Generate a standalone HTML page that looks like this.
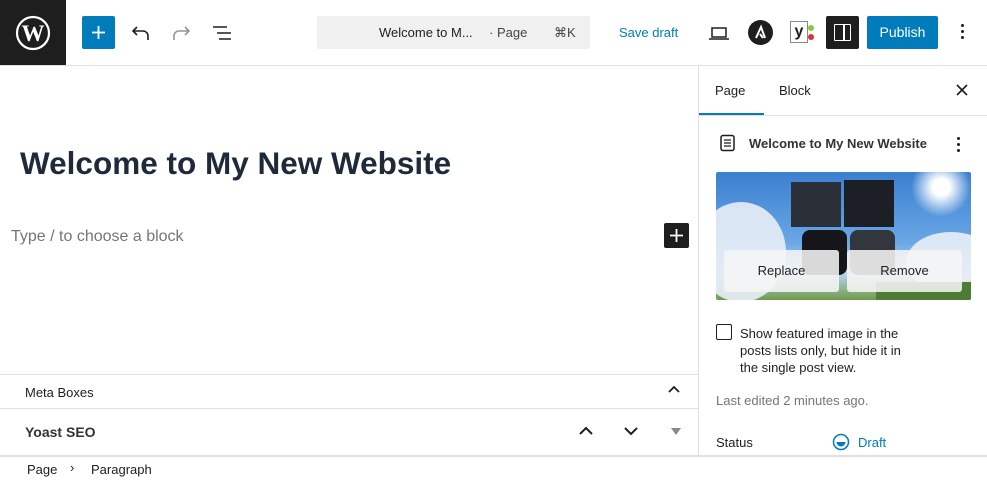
<!DOCTYPE html>
<html><head><style>
*{box-sizing:border-box;margin:0;padding:0}
body{width:987px;height:481px;overflow:hidden;font-family:"Liberation Sans",sans-serif;background:#fff;color:#1e1e1e;position:relative;font-size:13px}
.a{position:absolute}
</style></head><body>
<div class="a" style="left:0;top:0;width:66px;height:65px;background:#1e1e1e"></div>
<svg class="a" style="left:15px;top:15px" width="36" height="36" viewBox="0 0 36 36"><circle cx="18" cy="18" r="16" fill="none" stroke="#fff" stroke-width="2.2"/><text x="18" y="26" text-anchor="middle" font-family="Liberation Serif" font-weight="bold" font-size="23" fill="#fff">W</text></svg>
<div class="a" style="left:0;top:65px;width:987px;height:1px;background:#e0e0e0"></div>
<div class="a" style="left:82px;top:16px;width:33px;height:33px;background:#007cba;border-radius:2px"></div>
<svg class="a" style="left:82px;top:16px" width="33" height="33"><path d="M16.5 10v13M10 16.5h13" stroke="#fff" stroke-width="1.8"/></svg>
<svg class="a" style="left:128px;top:22px" width="24" height="22" viewBox="0 0 24 22"><path d="M20 18v-4a5 5 0 0 0-5-5H5M9 5L5 9l4 4" fill="none" stroke="#1e1e1e" stroke-width="1.6"/></svg>
<svg class="a" style="left:170px;top:22px" width="24" height="22" viewBox="0 0 24 22"><path d="M4 18v-4a5 5 0 0 1 5-5h10M15 5l4 4-4 4" fill="none" stroke="#949494" stroke-width="1.6"/></svg>
<svg class="a" style="left:210px;top:22px" width="24" height="22" viewBox="0 0 24 22"><path d="M3 5h14M7 11h14M9 17h12" stroke="#1e1e1e" stroke-width="1.6"/></svg>
<div class="a" style="left:317px;top:16px;width:273px;height:33px;background:#f0f0f0;border-radius:2px"></div>
<div class="a" style="left:379px;top:25px;font-size:13px">Welcome to M...</div>
<div class="a" style="left:489px;top:25px;font-size:13px;color:#444">· Page</div>
<div class="a" style="left:554px;top:25px;font-size:13px;color:#444">⌘K</div>
<div class="a" style="left:619px;top:25px;font-size:13px;color:#007cba">Save draft</div>
<svg class="a" style="left:707px;top:22px" width="24" height="22" viewBox="0 0 24 22"><path d="M5 6h14v9H5zM2 17h20" fill="none" stroke="#1e1e1e" stroke-width="1.5"/></svg>
<div class="a" style="left:748px;top:20px;width:25px;height:25px;border-radius:50%;background:#1e1e1e"></div>
<svg class="a" style="left:748px;top:20px" width="25" height="25" viewBox="0 0 25 25"><path d="M8 18l5-11 4 11M12 14l3 4" fill="none" stroke="#fff" stroke-width="2"/></svg>
<div class="a" style="left:790px;top:21px;width:18px;height:22px;border:1px solid #888;font-weight:bold;font-size:16px;text-align:center;line-height:20px">y</div>
<div class="a" style="left:808px;top:25px;width:6px;height:6px;border-radius:50%;background:#7ad03a"></div>
<div class="a" style="left:808px;top:34px;width:6px;height:6px;border-radius:50%;background:#dc3232"></div>
<div class="a" style="left:826px;top:16px;width:33px;height:33px;background:#1e1e1e;border-radius:2px"></div>
<div class="a" style="left:834px;top:24px;width:17px;height:17px;border:1.5px solid #fff;border-radius:1px"></div>
<div class="a" style="left:843px;top:24px;width:1.5px;height:17px;background:#fff"></div>
<div class="a" style="left:867px;top:16px;width:71px;height:33px;background:#007cba;border-radius:2px;color:#fff;font-size:14px;line-height:33px;text-align:center">Publish</div>
<div class="a" style="left:961px;top:24px;width:3px;height:3px;border-radius:50%;background:#1e1e1e;box-shadow:0 6px 0 #1e1e1e,0 12px 0 #1e1e1e"></div>
<div class="a" style="left:698px;top:66px;width:1px;height:390px;background:#e0e0e0"></div>
<div class="a" style="left:20px;top:145px;font-size:31.5px;font-weight:bold;color:#1e2a3a">Welcome to My New Website</div>
<div class="a" style="left:11px;top:228px;font-size:16px;color:#757575">Type / to choose a block</div>
<div class="a" style="left:664px;top:223px;width:25px;height:25px;background:#1e1e1e;border-radius:2px"></div>
<svg class="a" style="left:664px;top:223px" width="25" height="25"><path d="M12.5 6v13M6 12.5h13" stroke="#fff" stroke-width="1.8"/></svg>
<div class="a" style="left:0;top:374px;width:698px;height:1px;background:#e0e0e0"></div>
<div class="a" style="left:25px;top:385px;font-size:13px">Meta Boxes</div>
<svg class="a" style="left:667px;top:384px" width="14" height="12"><path d="M2 8l5-5 5 5" fill="none" stroke="#1e1e1e" stroke-width="1.8"/></svg>
<div class="a" style="left:0;top:408px;width:698px;height:1px;background:#e0e0e0"></div>
<div class="a" style="left:25px;top:424px;font-size:14px;font-weight:bold;color:#333">Yoast SEO</div>
<svg class="a" style="left:578px;top:425px" width="16" height="12"><path d="M2 9l6-6 6 6" fill="none" stroke="#1e1e1e" stroke-width="2"/></svg>
<svg class="a" style="left:623px;top:425px" width="16" height="12"><path d="M2 3l6 6 6-6" fill="none" stroke="#1e1e1e" stroke-width="2"/></svg>
<svg class="a" style="left:671px;top:428px" width="10" height="8"><path d="M0 0h10L5 7z" fill="#888"/></svg>
<div class="a" style="left:0;top:455px;width:987px;height:2px;background:#e0e0e0"></div>
<div class="a" style="left:27px;top:462px;font-size:13px">Page</div>
<div class="a" style="left:70px;top:460px;font-size:13px">›</div>
<div class="a" style="left:91px;top:462px;font-size:13px">Paragraph</div>
<div class="a" style="left:715px;top:83px;font-size:13px">Page</div>
<div class="a" style="left:779px;top:83px;font-size:13px">Block</div>
<div class="a" style="left:699px;top:113px;width:65px;height:2px;background:#007cba"></div>
<div class="a" style="left:699px;top:115px;width:288px;height:1px;background:#e0e0e0"></div>
<svg class="a" style="left:955px;top:83px" width="14" height="14"><path d="M2 2l10 10M12 2L2 12" stroke="#1e1e1e" stroke-width="1.6"/></svg>
<svg class="a" style="left:719px;top:134px" width="18" height="18"><rect x="2" y="1.5" width="13" height="15" rx="2" fill="none" stroke="#1e1e1e" stroke-width="1.5"/><path d="M5 6h7M5 9h7M5 12h7" stroke="#1e1e1e" stroke-width="1.3"/></svg>
<div class="a" style="left:749px;top:136px;font-size:13px;font-weight:bold;color:#333">Welcome to My New Website</div>
<div class="a" style="left:957px;top:137px;width:3px;height:3px;border-radius:50%;background:#1e1e1e;box-shadow:0 6px 0 #1e1e1e,0 12px 0 #1e1e1e"></div>
<div class="a" style="left:716px;top:172px;width:255px;height:128px;background:linear-gradient(180deg,#3b7fcf 0%,#6aa7e6 55%,#b8d2ee 80%,#6f9b4a 100%);overflow:hidden;border-radius:2px">
 <div class="a" style="left:-20px;top:30px;width:90px;height:100px;background:#e8eef6;border-radius:50%;opacity:.9"></div>
 <div class="a" style="left:190px;top:60px;width:90px;height:60px;background:#e9eff6;border-radius:50%;opacity:.9"></div>
 <div class="a" style="left:195px;top:-15px;width:60px;height:60px;background:radial-gradient(#fff 20%,rgba(255,255,255,0) 70%)"></div>
 <div class="a" style="left:75px;top:10px;width:50px;height:45px;background:#2b2f38"></div>
 <div class="a" style="left:128px;top:8px;width:50px;height:47px;background:#1c1f25"></div>
 <div class="a" style="left:86px;top:58px;width:45px;height:45px;background:#14161a;border-radius:8px"></div>
 <div class="a" style="left:134px;top:58px;width:45px;height:45px;background:#33363d;border-radius:8px"></div>
 <div class="a" style="left:160px;top:110px;width:95px;height:20px;background:#4d7c34"></div>
</div>
<div class="a" style="left:724px;top:250px;width:115px;height:42px;background:rgba(245,245,245,.88);border-radius:3px;font-size:13px;line-height:42px;text-align:center">Replace</div>
<div class="a" style="left:847px;top:250px;width:115px;height:42px;background:rgba(245,245,245,.88);border-radius:3px;font-size:13px;line-height:42px;text-align:center">Remove</div>
<div class="a" style="left:716px;top:324px;width:16px;height:16px;border:1px solid #1e1e1e;border-radius:2px"></div>
<div class="a" style="left:740px;top:325px;font-size:13px;line-height:17px;width:182px">Show featured image in the posts lists only, but hide it in the single post view.</div>
<div class="a" style="left:716px;top:393px;font-size:13px;color:#757575">Last edited 2 minutes ago.</div>
<div class="a" style="left:716px;top:435px;font-size:13px">Status</div>
<svg class="a" style="left:832px;top:433px" width="18" height="18"><circle cx="9" cy="9" r="7.5" fill="none" stroke="#007cba" stroke-width="1.5"/><path d="M4.5 9a4.5 4.5 0 0 0 9 0z" fill="#007cba"/></svg>
<div class="a" style="left:858px;top:435px;font-size:13px;color:#007cba">Draft</div>
</body></html>
